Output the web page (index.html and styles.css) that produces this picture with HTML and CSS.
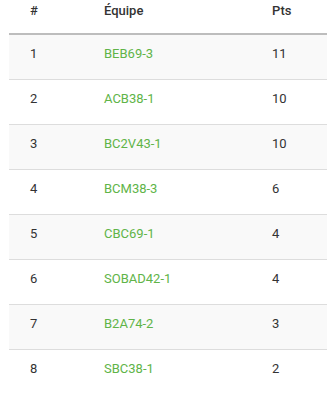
FILE: index.html
```html
<!DOCTYPE html>
<html lang="fr">
<head>
<meta charset="utf-8">
<link rel="stylesheet" href="styles.css">
</head>
<body>
<table class="ranking">
  <thead>
    <tr><th class="c-rank">#</th><th class="c-team">Équipe</th><th class="c-pts">Pts</th></tr>
  </thead>
  <tbody>
    <tr><td>1</td><td class="team">BEB69-3</td><td>11</td></tr>
    <tr><td>2</td><td class="team">ACB38-1</td><td>10</td></tr>
    <tr><td>3</td><td class="team">BC2V43-1</td><td>10</td></tr>
    <tr><td>4</td><td class="team">BCM38-3</td><td>6</td></tr>
    <tr><td>5</td><td class="team">CBC69-1</td><td>4</td></tr>
    <tr><td>6</td><td class="team">SOBAD42-1</td><td>4</td></tr>
    <tr><td>7</td><td class="team">B2A74-2</td><td>3</td></tr>
    <tr><td>8</td><td class="team">SBC38-1</td><td>2</td></tr>
  </tbody>
</table>
</body>
</html>
```

FILE: styles.css
```css
html, body {
  margin: 0;
  padding: 0;
  background: #fff;
}
body {
  padding-left: 9px;
  font-family: Roboto, "Liberation Sans", sans-serif;
  font-size: 13px;
  color: #333;
}
.ranking {
  width: 318px;
  border-collapse: collapse;
  table-layout: fixed;
}
.ranking th {
  text-align: left;
  font-weight: 500;
  line-height: 20px;
  padding: 1px 0 12px;
  border-bottom: 2px solid #bdbdbd;
}
.ranking th.c-rank { width: 74px; padding-left: 21px; }
.ranking th.c-team { width: 168px; }
.ranking td {
  line-height: 20px;
  padding: 9px 0 15px;
  border-bottom: 1px solid #ddd;
}
.ranking td:first-child { padding-left: 21px; }
.ranking tbody tr:last-child td { border-bottom: none; }
.ranking tbody tr:nth-child(odd) { background: #f9f9f9; }
.team { color: #60b448; }
```
